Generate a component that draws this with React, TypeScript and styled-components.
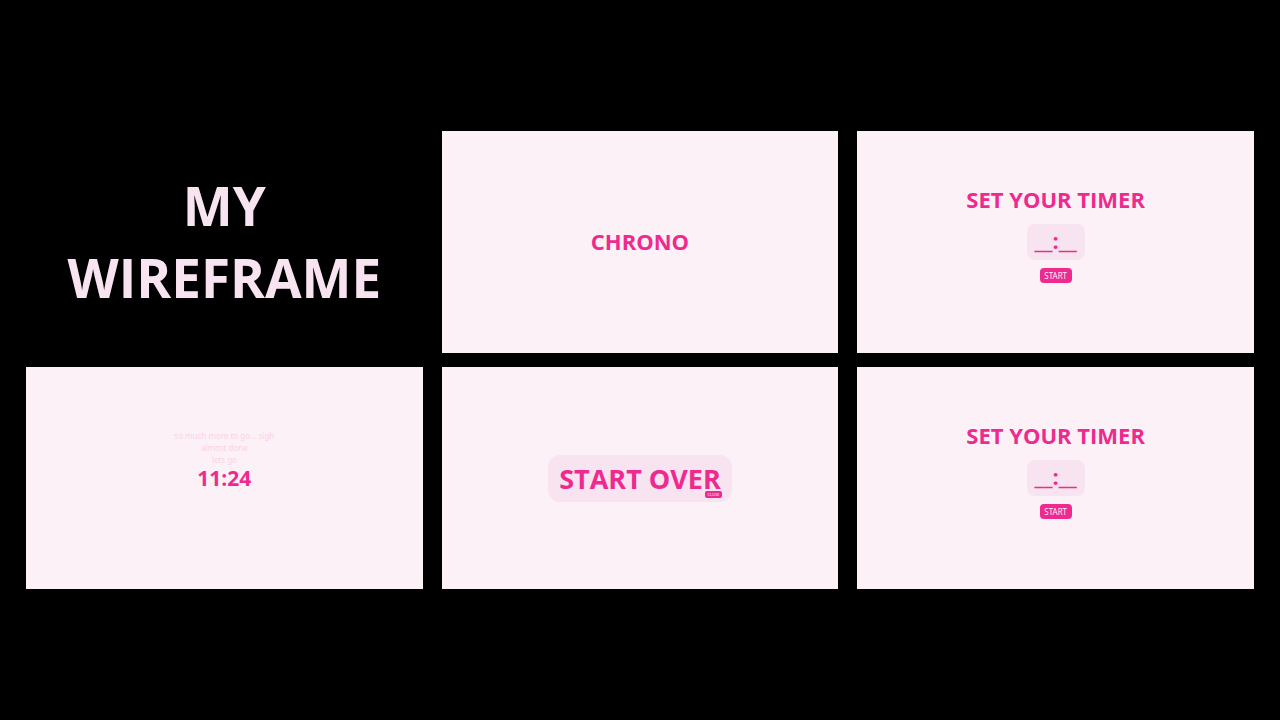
import React from "react";
import styled, { createGlobalStyle } from "styled-components";

const pink = "#ee2a8f";
const blush = "#fcf1f7";
const petal = "#f7e4f0";

const GlobalStyle = createGlobalStyle`
  *, *::before, *::after { box-sizing: border-box; }
  body {
    margin: 0;
    background: #000;
    font-family: "Open Sans", "Noto Sans", sans-serif;
  }
  h1, h2, p { margin: 0; }
  button, input { font-family: inherit; border: 0; margin: 0; }
`;

const Board = styled.main`
  min-height: 100vh;
  padding: 0 26px;
  display: grid;
  grid-template-columns: repeat(3, minmax(0, 1fr));
  gap: 14px 19px;
  align-content: center;
`;

const Cell = styled.section`
  aspect-ratio: 396 / 222;
  display: flex;
  flex-direction: column;
  align-items: center;
  justify-content: center;
  text-align: center;
`;

const Screen = styled(Cell)`
  background: ${blush};
  color: ${pink};
`;

const TimerScreen = styled(Screen)`
  justify-content: flex-start;
  padding-top: 53px;
`;

const BoardTitle = styled.h1`
  color: ${petal};
  font-size: 53px;
  line-height: 72px;
  font-weight: 700;
`;

const Heading = styled.h2`
  padding-bottom: 2px;
  font-size: 22px;
  line-height: 30px;
  font-weight: 700;
  white-space: nowrap;
`;

const TimeInput = styled.input`
  width: 58px;
  height: 36px;
  margin-top: 8px;
  padding: 0 0 4px;
  border-radius: 8px;
  background: ${petal};
  color: ${pink};
  font-size: 22px;
  font-weight: 700;
  text-align: center;
`;

const StartButton = styled.button`
  width: 32px;
  height: 15px;
  margin-top: 8px;
  padding: 0;
  border-radius: 4px;
  background: ${pink};
  color: ${blush};
  font-family: "Noto Sans", sans-serif;
  font-size: 8px;
  line-height: 15px;
`;

const Countdown = styled.div`
  display: flex;
  flex-direction: column;
  align-items: center;
  padding-bottom: 36px;
`;

const Message = styled.p`
  color: #f8d3e6;
  font-family: "Noto Sans", sans-serif;
  font-size: 8px;
  line-height: 12px;
`;

const TimeLeft = styled.p`
  font-size: 21px;
  line-height: 24px;
  font-weight: 700;
`;

const Restart = styled.div`
  position: relative;
`;

const RestartButton = styled.button`
  width: 184px;
  height: 47px;
  padding: 0;
  border-radius: 12px;
  background: ${petal};
  color: ${pink};
  font-size: 27px;
  font-weight: 700;
  white-space: nowrap;
  display: block;
`;

const CloseButton = styled.button`
  position: absolute;
  right: 10px;
  bottom: 4px;
  width: 17px;
  height: 7px;
  padding: 0;
  border-radius: 2px;
  background: ${pink};
  color: ${blush};
  font-size: 4px;
  line-height: 7px;
`;

function SetTimer() {
  return (
    <TimerScreen>
      <Heading>SET YOUR TIMER</Heading>
      <TimeInput aria-label="Timer length" defaultValue="__:__" />
      <StartButton type="button">START</StartButton>
    </TimerScreen>
  );
}

export default function App() {
  return (
    <>
      <GlobalStyle />
      <Board>
        <Cell>
          <BoardTitle>
            MY
            <br />
            WIREFRAME
          </BoardTitle>
        </Cell>
        <Screen>
          <Heading>CHRONO</Heading>
        </Screen>
        <SetTimer />
        <Screen>
          <Countdown>
            <Message>so much more to go... sigh</Message>
            <Message>almost done</Message>
            <Message>lets go</Message>
            <TimeLeft>11:24</TimeLeft>
          </Countdown>
        </Screen>
        <Screen>
          <Restart>
            <RestartButton type="button">START OVER</RestartButton>
            <CloseButton type="button">CLOSE</CloseButton>
          </Restart>
        </Screen>
        <SetTimer />
      </Board>
    </>
  );
}
